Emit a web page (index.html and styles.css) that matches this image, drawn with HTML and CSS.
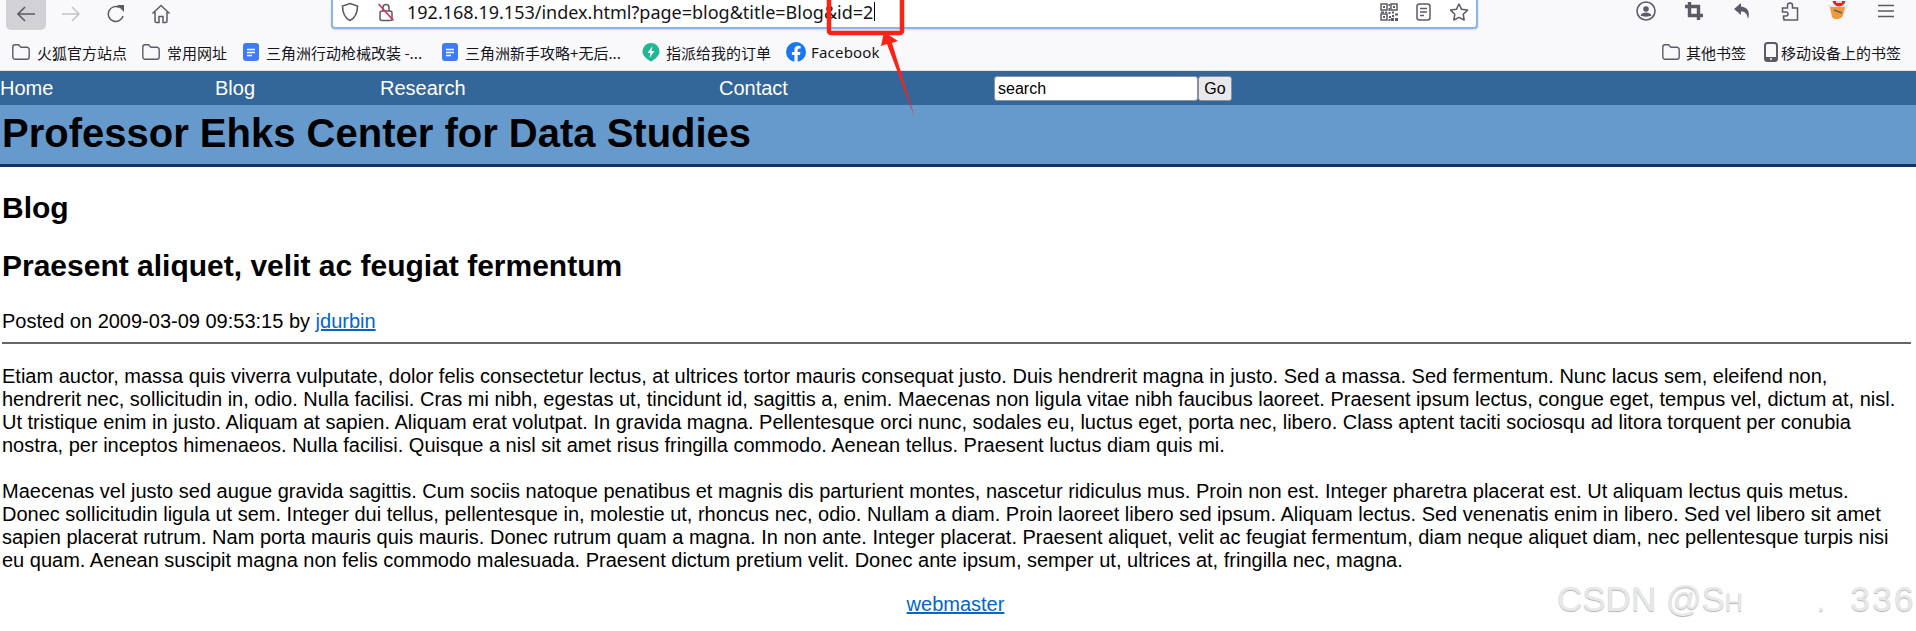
FILE: index.html
```html
<!DOCTYPE html>
<html lang="en">
<head>
<meta charset="utf-8">
<title>Professor Ehks Center for Data Studies</title>
<link rel="stylesheet" href="styles.css">
</head>
<body>
<div class="chrome">
  <div class="toolbar">
    <div class="nav-btns">
      <span class="tb-btn active"><svg width="20" height="18" viewBox="0 0 20 18"><path d="M19 9H2M9 2L2 9l7 7" fill="none" stroke="#5b5b66" stroke-width="1.600"/></svg></span>
      <span class="tb-btn"><svg width="20" height="18" viewBox="0 0 20 18"><path d="M1 9h17M11 2l7 7-7 7" fill="none" stroke="#c4c4c8" stroke-width="1.500"/></svg></span>
      <span class="tb-btn"><svg width="20" height="20" viewBox="0 0 20 20"><path d="M17 12A7.500 7.500 0 1 1 13.500 3.500" fill="none" stroke="#5b5b66" stroke-width="1.500"/><path d="M11 1l7 0 0 7z" fill="#5b5b66"/></svg></span>
      <span class="tb-btn"><svg width="20" height="20" viewBox="0 0 20 20"><path d="M1.500 9.500L10 1.500l8.500 8M4 8v9a1.500 1.500 0 0 0 1.500 1.500H8v-6h4v6h2.500A1.500 1.500 0 0 0 16 17V8" fill="none" stroke="#5b5b66" stroke-width="1.500"/></svg></span>
    </div>
    <div class="urlbar">
      <svg class="shield" width="18" height="20" viewBox="0 0 18 20"><path d="M9 1.500l7.500 2.500c0 7-1.500 11.500-7.500 14.500C3 15.500 1.500 11 1.500 4z" fill="none" stroke="#5b5b66" stroke-width="1.600"/></svg>
      <svg class="lock" width="18" height="20" viewBox="0 0 18 20"><rect x="3" y="9" width="12" height="9.500" rx="2" fill="none" stroke="#5b5b66" stroke-width="1.500"/><path d="M6 9V5.500a3 3 0 0 1 6 0V9" fill="none" stroke="#5b5b66" stroke-width="1.500"/><path d="M1.500 2l15 16.500" stroke="#e22850" stroke-width="1.500"/></svg>
      <span class="url">192.168.19.153/index.html?page=blog&amp;title=Blog&amp;id=2</span><span class="caret"></span>
      <span class="url-icons">
        <svg width="18" height="18" viewBox="0 0 18 18"><path d="M1 1h6v6H1zM11 1h6v6h-6zM1 11h6v6H1z" fill="none" stroke="#5b5b66" stroke-width="1.500"/><path d="M3 3h2v2H3zM13 3h2v2h-2zM3 13h2v2H3zM8.500 1h1.500v2H8.500zM8.500 5h1.500v3H8.500zM8.500 9h2v2h-2zM12 8.500h2v2h-2zM15 10.500h3v2h-3zM12 12h2v2h-2zM9 13h2v2H9zM11 15h3v3h-3zM15 15h3v3h-3zM8.500 16h2v2h-2zM1 8.500h3v1.500H1zM5 8.500h2v1.500H5z" fill="#5b5b66"/></svg>
        <svg width="15" height="18" viewBox="0 0 15 18"><rect x="1" y="1" width="13" height="16" rx="2.500" fill="none" stroke="#5b5b66" stroke-width="1.500"/><path d="M4 5.500h7M4 9h7M4 12.500h4" stroke="#5b5b66" stroke-width="1.500"/></svg>
        <svg width="20" height="18" viewBox="0 0 20 18"><path d="M10 1l2.600 5.300 5.900.8-4.300 4.100 1 5.800L10 14.300 4.800 17l1-5.800L1.500 7.100l5.900-.8z" fill="none" stroke="#5b5b66" stroke-width="1.500" stroke-linejoin="round"/></svg>
      </span>
    </div>
    <div class="tools">
      <span class="tool"><svg width="20" height="20" viewBox="0 0 20 20"><circle cx="10" cy="10" r="9" fill="none" stroke="#5b5b66" stroke-width="1.600"/><circle cx="10" cy="8" r="2.800" fill="#5b5b66"/><path d="M4.500 14.500c1-2.300 3.200-3 5.500-3s4.500.7 5.500 3c-2.500 1.500-8.500 1.500-11 0z" fill="#5b5b66"/></svg></span>
      <span class="tool"><svg width="18" height="18" viewBox="0 0 18 18"><path d="M4.500 0v13.500H18M0 4.500h13.500V18" fill="none" stroke="#5b5b66" stroke-width="3.400"/></svg></span>
      <span class="tool"><svg width="18" height="18" viewBox="0 0 18 18"><path d="M8 1L1 7l7 6V9.500c3.500 0 6 1.500 7 7.500 2.500-7-.5-12-7-12.500z" fill="#5b5b66"/></svg></span>
      <span class="tool"><svg width="18" height="20" viewBox="0 0 18 20"><path d="M1.500 7h5V4.500a2.500 2.500 0 0 1 5 0V7h5v12H3v-1.500h-.5V15H5a1.800 1.800 0 0 0 0-4H1.500z" fill="none" stroke="#5b5b66" stroke-width="1.500"/></svg></span>
      <span class="tool"><svg width="24" height="20" viewBox="0 0 24 20"><path d="M1 4h22l-5 8-5 2-5-1z" fill="#e8e8e8"/><path d="M4 6h15l-2 8c-1 4-8 6-11 2z" fill="#ee9a3c"/><path d="M8 9l8 3" stroke="#67605a" stroke-width="1.500"/><circle cx="13" cy="-1" r="6.500" fill="#e5231f"/><path d="M10 1h6" stroke="#fff" stroke-width="1.500"/></svg></span>
      <span class="tool"><svg width="16" height="14" viewBox="0 0 16 14"><path d="M0 1.500h16M0 7h16M0 12.500h16" stroke="#5b5b66" stroke-width="1.500"/></svg></span>
    </div>
  </div>
  <div class="bookmarks">
    <span class="bm bm-1"><svg width="18" height="16" viewBox="0 0 18 16"><path d="M.8 3A2.200 2.200 0 0 1 3 .8h3.500L9 3.300h6A2.200 2.200 0 0 1 17.200 5.500v7.500a2.200 2.200 0 0 1-2.200 2.200H3A2.200 2.200 0 0 1 .8 13z" fill="none" stroke="#5b5b66" stroke-width="1.400"/></svg>火狐官方站点</span>
    <span class="bm bm-2"><svg width="18" height="16" viewBox="0 0 18 16"><path d="M.8 3A2.200 2.200 0 0 1 3 .8h3.500L9 3.300h6A2.200 2.200 0 0 1 17.200 5.500v7.500a2.200 2.200 0 0 1-2.200 2.200H3A2.200 2.200 0 0 1 .8 13z" fill="none" stroke="#5b5b66" stroke-width="1.400"/></svg>常用网址</span>
    <span class="bm bm-3"><svg width="16" height="18" viewBox="0 0 16 18"><rect width="16" height="18" rx="3" fill="#3f7bf5"/><path d="M4 6.500h8M4 9.500h8M4 12.500h5" stroke="#fff" stroke-width="1.300"/></svg>三角洲行动枪械改装 -...</span>
    <span class="bm bm-4"><svg width="16" height="18" viewBox="0 0 16 18"><rect width="16" height="18" rx="3" fill="#3f7bf5"/><path d="M4 6.500h8M4 9.500h8M4 12.500h5" stroke="#fff" stroke-width="1.300"/></svg>三角洲新手攻略+无后...</span>
    <span class="bm bm-5"><svg width="18" height="20" viewBox="0 0 18 20"><path d="M9 1a8.500 8.500 0 0 1 8.500 8.500C17.500 14 12.500 17.500 9 19.500 5.500 17.500.5 14 .5 9.500A8.500 8.500 0 0 1 9 1z" fill="#1fb894"/><path d="M10.500 4L5.500 11h3l-1 5 5-7h-3z" fill="#fff"/></svg>指派给我的订单</span>
    <span class="bm bm-6"><svg width="20" height="20" viewBox="0 0 17 17"><circle cx="8.500" cy="8.500" r="8.500" fill="#1877f2"/><path d="M7.200 17v-6H5V8.500h2.200V6.600c0-2.200 1.300-3.400 3.300-3.400l1.900.2v2.100h-1.100c-1 0-1.400.7-1.400 1.400v1.600h2.400l-.4 2.500h-2V17z" fill="#fff"/></svg><span class="latin">Facebook</span></span>
    <span class="bm bm-7"><svg width="18" height="16" viewBox="0 0 18 16"><path d="M.8 3A2.200 2.200 0 0 1 3 .8h3.500L9 3.300h6A2.200 2.200 0 0 1 17.200 5.500v7.500a2.200 2.200 0 0 1-2.200 2.200H3A2.200 2.200 0 0 1 .8 13z" fill="none" stroke="#5b5b66" stroke-width="1.400"/></svg>其他书签</span>
    <span class="bm bm-8"><svg width="14" height="20" viewBox="0 0 14 20"><rect x="1" y="1" width="12" height="18" rx="2.500" fill="none" stroke="#5b5b66" stroke-width="2"/><path d="M1 15h12v2a2 2 0 0 1-2 2H3a2 2 0 0 1-2-2z" fill="#5b5b66"/><circle cx="7" cy="17" r="1" fill="#fff"/></svg>移动设备上的书签</span>
  </div>
</div>
<nav class="site-nav">
  <a class="nav-link w-home">Home</a>
  <a class="nav-link w-blog">Blog</a>
  <a class="nav-link w-research">Research</a>
  <a class="nav-link w-contact">Contact</a>
  <form class="search"><input class="search-input" value="search"><button class="search-go" type="button">Go</button></form>
</nav>
<header class="site-header"><h1>Professor Ehks Center for Data Studies</h1></header>
<main class="content">
  <h2>Blog</h2>
  <h2 class="post-title">Praesent aliquet, velit ac feugiat fermentum</h2>
  <p class="meta">Posted on 2009-03-09 09:53:15 by <a href="#">jdurbin</a></p>
  <hr>
  <p class="para">Etiam auctor, massa quis viverra vulputate, dolor felis consectetur lectus, at ultrices tortor mauris consequat justo. Duis hendrerit magna in justo. Sed a massa. Sed fermentum. Nunc lacus sem, eleifend non, hendrerit nec, sollicitudin in, odio. Nulla facilisi. Cras mi nibh, egestas ut, tincidunt id, sagittis a, enim. Maecenas non ligula vitae nibh faucibus laoreet. Praesent ipsum lectus, congue eget, tempus vel, dictum at, nisl. Ut tristique enim in justo. Aliquam at sapien. Aliquam erat volutpat. In gravida magna. Pellentesque orci nunc, sodales eu, luctus eget, porta nec, libero. Class aptent taciti sociosqu ad litora torquent per conubia nostra, per inceptos himenaeos. Nulla facilisi. Quisque a nisl sit amet risus fringilla commodo. Aenean tellus. Praesent luctus diam quis mi.</p>
  <p class="para para-2">Maecenas vel justo sed augue gravida sagittis. Cum sociis natoque penatibus et magnis dis parturient montes, nascetur ridiculus mus. Proin non est. Integer pharetra placerat est. Ut aliquam lectus quis metus. Donec sollicitudin ligula ut sem. Integer dui tellus, pellentesque in, molestie ut, rhoncus nec, odio. Nullam a diam. Proin laoreet libero sed ipsum. Aliquam lectus. Sed venenatis enim in libero. Sed vel libero sit amet sapien placerat rutrum. Nam porta mauris quis mauris. Donec rutrum quam a magna. In non ante. Integer placerat. Praesent aliquet, velit ac feugiat fermentum, diam neque aliquet diam, nec pellentesque turpis nisi eu quam. Aenean suscipit magna non felis commodo malesuada. Praesent dictum pretium velit. Donec ante ipsum, semper ut, ultrices at, fringilla nec, magna.</p>
</main>
<footer class="site-footer"><a href="#">webmaster</a></footer>
<div class="annotation">
  <svg width="100" height="125" viewBox="0 0 100 125"><path d="M9 -5V31a2 2 0 0 0 2 2H80a2 2 0 0 0 2-2V-5" fill="none" stroke="#fc2216" stroke-width="4.500"/><path d="M64 32L78 41 72 43 95 118 67 44 61 46z" fill="#fc2216"/></svg>
</div>
<div class="watermark">CSDN @S<span class="wm-small">H</span><span class="wm-dot">.</span><span class="wm-num">336</span></div>
</body>
</html>
```
FILE: styles.css
```css
* { box-sizing: border-box; }
html, body { margin: 0; padding: 0; height: 631px; overflow: hidden; background: #fff; }
body { font-family: "Liberation Sans", Arial, sans-serif; font-size: 20px; color: #000; position: relative; }

.chrome { height: 71px; background: #f9f9fb; border-bottom: 1px solid #e0e0e2; font-family: "Noto Sans CJK SC", "Noto Sans", sans-serif; }
.toolbar { height: 37px; display: flex; align-items: flex-start; }
.nav-btns { display: flex; width: 331px; padding-left: 6px; gap: 5px; flex: none; }
.tb-btn { width: 40px; height: 30px; display: flex; align-items: center; justify-content: center; border-radius: 0 0 5px 5px; padding-bottom: 3px; }
.tb-btn.active { background: #d2d2d6; }
.urlbar { width: 1147px; height: 29px; background: #fff; border: 2px solid #8ab4ee; border-top: 0; border-radius: 0 0 4px 4px; display: flex; align-items: center; padding: 0 7px 4px 8px; flex: none; box-shadow: 0 1px 2px rgba(0,0,0,.15); }
.shield { margin-right: 18px; }
.lock { margin-right: 12px; }
.url { font-family: "Noto Sans", sans-serif; font-size: 18px; line-height: 24px; color: #15141a; white-space: nowrap; }
.caret { width: 1px; height: 19px; background: #000; margin-left: 1px; }
.url-icons { margin-left: auto; display: flex; gap: 18px; align-items: center; }
.tools { flex: 1; display: flex; align-items: center; height: 22px; padding-left: 144px; }
.tool { width: 48px; display: flex; justify-content: center; flex: none; }

.bookmarks { height: 30px; display: flex; align-items: center; font-size: 15px; color: #15141a; }
.bm { display: flex; align-items: center; gap: 7px; white-space: nowrap; }
.bm-1 { margin-left: 12px; }
.bm-2 { margin-left: 15px; }
.bm-3 { margin-left: 16px; }
.bm-4 { margin-left: 20px; }
.bm-5 { margin-left: 21px; gap: 6px; }
.bm-6 { margin-left: 15px; gap: 5px; }
.bm-7 { margin-left: auto; gap: 6px; }
.bm-8 { margin-left: 18px; margin-right: 15px; gap: 3px; }
.latin { font-family: "Noto Sans", sans-serif; font-size: 15px; letter-spacing: .2px; }

.site-nav { height: 34px; background: #336699; display: flex; align-items: center; color: #fff; }
.nav-link { color: #fff; font-size: 20px; text-decoration: none; }
.w-home { width: 215px; }
.w-blog { width: 165px; }
.w-research { width: 339px; }
.w-contact { width: 275px; }
.search { display: flex; align-items: center; padding-top: 1px; }
.search-input { width: 204px; height: 25px; border: 1px solid #8f8f9d; border-radius: 3px; background: #fff; font: 16px "Liberation Sans", sans-serif; padding: 0 3px; color: #000; }
.search-go { width: 34px; height: 25px; border: 1px solid #8f8f9d; border-radius: 3px; background: #e9e9ed; font: 16px "Liberation Sans", sans-serif; padding: 0; color: #000; }

.site-header { height: 62px; background: #6699cc; border-bottom: 3px solid #133366; }
.site-header h1 { margin: 0; padding-left: 2px; font-size: 40px; line-height: 57px; font-weight: bold; }

.content { padding: 0 2px; }
.content h2 { font-size: 30px; margin: 0; font-weight: bold; line-height: 34px; padding-top: 24px; }
.meta { margin: 27px 0 0; line-height: 23px; }
a { color: #0066cc; text-decoration: underline; }
hr { margin: 9px 3px 0 0; border: 0; border-top: 2px solid #666; height: 2px; }
.para { margin: 21px 0 0; padding-right: 8px; line-height: 23px; }
.para-2 { margin-top: 23px; }
.site-footer { text-align: center; margin-top: 21px; padding-right: 5px; line-height: 23px; }

.annotation { position: absolute; left: 820px; top: 0; width: 100px; height: 125px; }
.watermark { position: absolute; left: 1557px; top: 579px; font-size: 35px; line-height: 40px; color: #e8e8e8; white-space: nowrap; text-shadow: 0 1px 1px #b5b5b5; }
.wm-small { font-size: 25px; }
.wm-dot { display: inline-block; margin: 0 25px 0 74px; font-size: 30px; }
.wm-num { letter-spacing: 2.500px; }
```
